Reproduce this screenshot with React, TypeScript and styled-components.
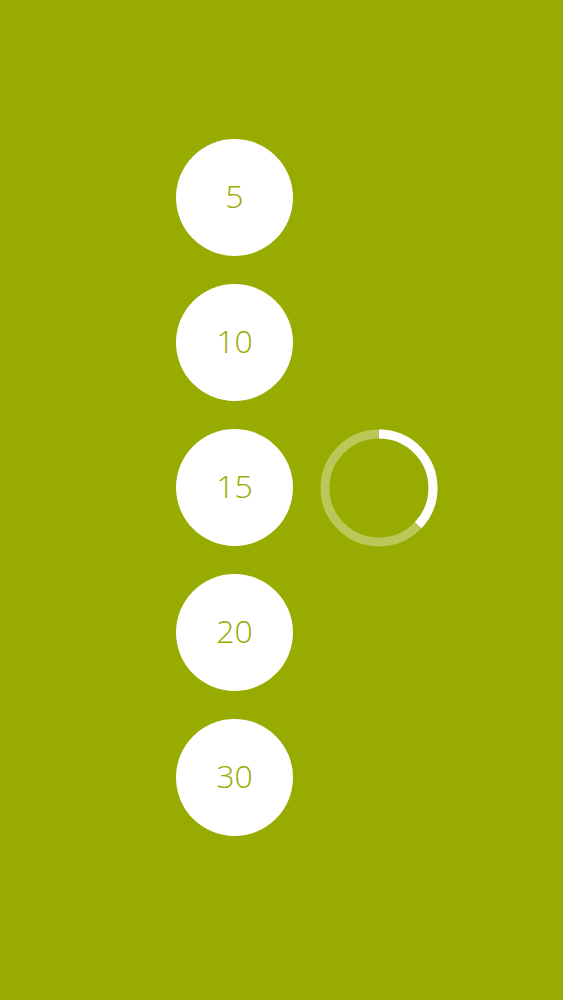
import React from "react";
import styled, { createGlobalStyle } from "styled-components";

const GlobalStyle = createGlobalStyle`
  html, body {
    margin: 0;
    padding: 0;
    background: #97ab00;
  }
  body {
    font-family: "Open Sans", "Noto Sans", sans-serif;
  }
`;

const Page = styled.div`
  width: 563px;
  height: 1000px;
  background: #97ab00;
  padding: 139px 0 0 176px;
  box-sizing: border-box;
`;

const Row = styled.div`
  display: flex;
  align-items: center;
  gap: 27px;
`;

const Column = styled.div`
  display: flex;
  flex-direction: column;
  gap: 28px;
`;

const Choice = styled.button`
  width: 117px;
  height: 117px;
  border-radius: 50%;
  border: none;
  background: #ffffff;
  color: #97ab00;
  font-family: "Open Sans", "Noto Sans", sans-serif;
  font-weight: 300;
  font-size: 32px;
  display: flex;
  align-items: center;
  justify-content: center;
  padding: 0 0 4px;
  cursor: pointer;
`;

const Spinner = ({ progress }: { progress: number }) => {
  const r = 54;
  const c = 2 * Math.PI * r;
  return (
    <svg width="118" height="118" viewBox="0 0 118 118">
      <circle cx="59" cy="59" r={r} fill="none" stroke="rgba(255,255,255,0.35)" strokeWidth="9" />
      <circle
        cx="59"
        cy="59"
        r={r}
        fill="none"
        stroke="#ffffff"
        strokeWidth="9"
        strokeDasharray={`${c * progress} ${c}`}
        transform="rotate(-90 59 59)"
      />
    </svg>
  );
};

const values = [5, 10, 15, 20, 30];

export default function App() {
  return (
    <>
      <GlobalStyle />
      <Page>
        <Row>
          <Column>
            {values.map((v) => (
              <Choice key={v}>{v}</Choice>
            ))}
          </Column>
          <Spinner progress={0.37} />
        </Row>
      </Page>
    </>
  );
}
